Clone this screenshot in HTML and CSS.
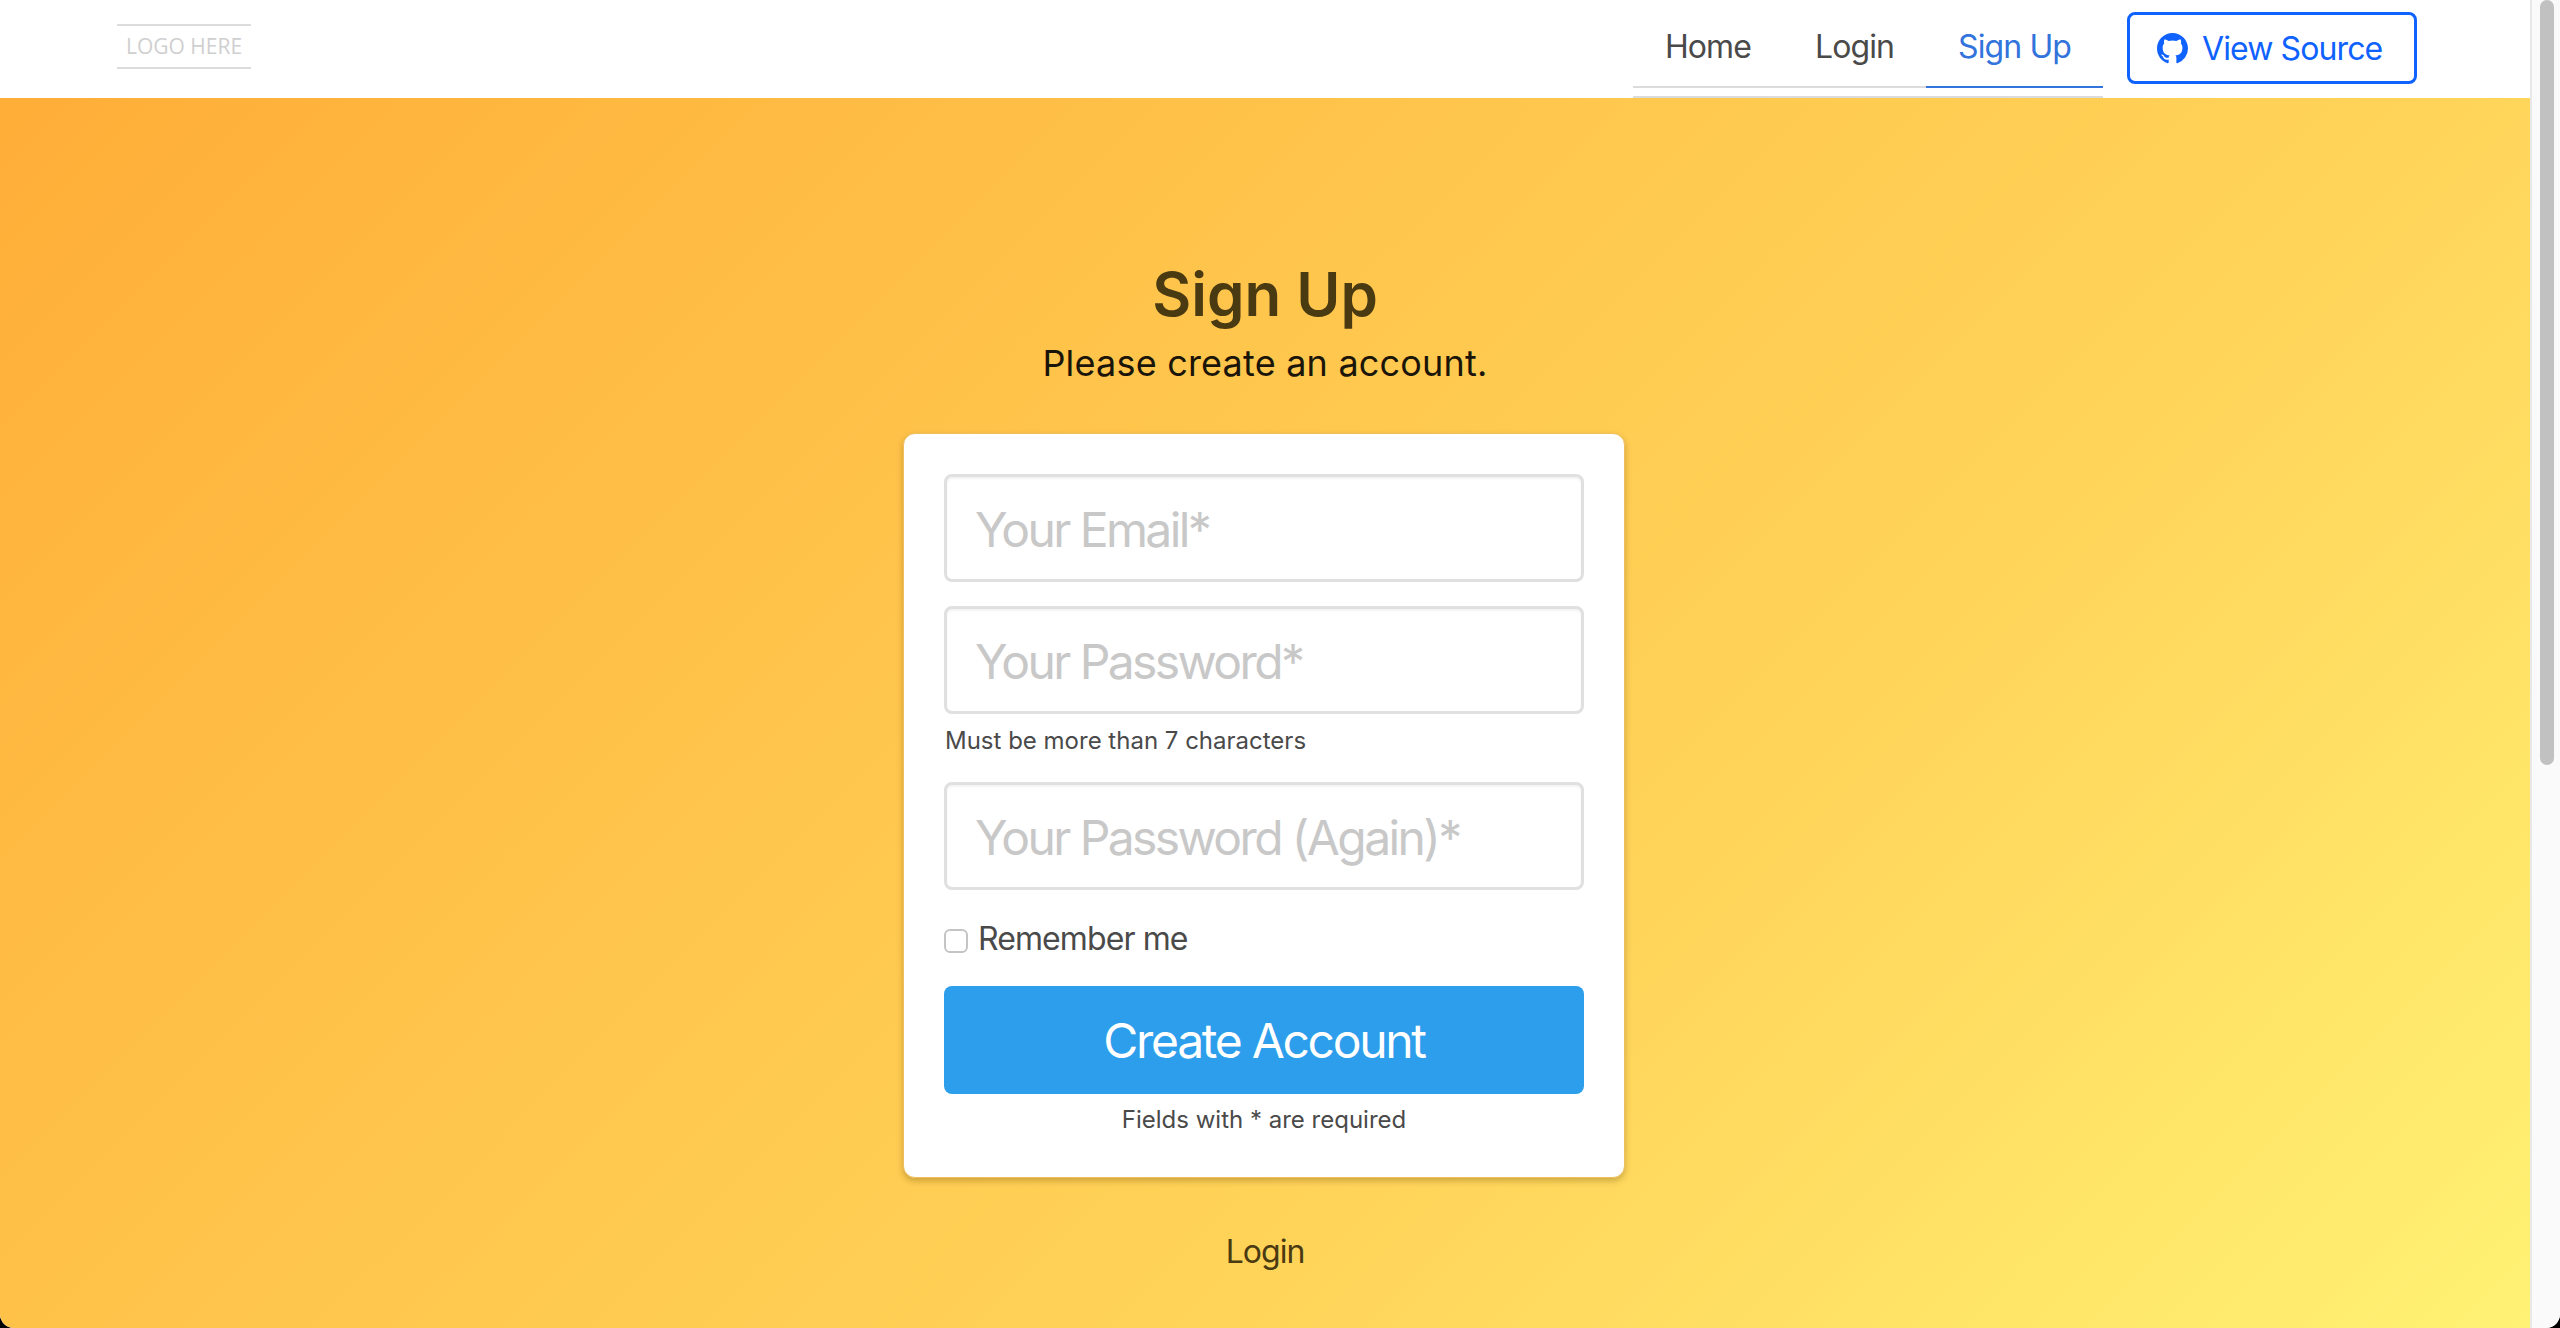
FILE: index.html
```html
<!DOCTYPE html>
<html lang="en">
<head>
    <meta charset="UTF-8">
    <meta name="viewport" content="width=device-width, initial-scale=1.0">
    <title>Sign Up</title>
    <link rel="stylesheet" href="styles.css">
</head>
<body>
    <div class="window">
        <div class="page">
            <header class="navbar">
                <a class="logo" href="#">LOGO HERE</a>
                <div class="nav-right">
                    <nav class="tabs">
                        <a class="tab" href="#">Home</a>
                        <a class="tab" href="#">Login</a>
                        <a class="tab active" href="#">Sign Up</a>
                    </nav>
                    <a class="source-btn" href="#">
                        <svg class="github-icon" viewBox="0 0 16 16" aria-hidden="true">
                            <path fill-rule="evenodd" d="M8 0C3.58 0 0 3.58 0 8c0 3.54 2.29 6.53 5.47 7.59.4.07.55-.17.55-.38 0-.19-.01-.82-.01-1.49-2.01.37-2.53-.49-2.69-.94-.09-.23-.48-.94-.82-1.13-.28-.15-.68-.52-.01-.53.63-.01 1.08.58 1.23.82.72 1.21 1.87.87 2.33.66.07-.52.28-.87.51-1.07-1.78-.2-3.64-.89-3.64-3.95 0-.87.31-1.59.82-2.15-.08-.2-.36-1.02.08-2.12 0 0 .67-.21 2.2.82.64-.18 1.32-.27 2-.27.68 0 1.36.09 2 .27 1.53-1.04 2.2-.82 2.2-.82.44 1.1.16 1.92.08 2.12.51.56.82 1.27.82 2.15 0 3.07-1.87 3.75-3.65 3.95.29.25.54.73.54 1.48 0 1.07-.01 1.93-.01 2.2 0 .21.15.46.55.38A8.013 8.013 0 0016 8c0-4.42-3.58-8-8-8z"></path>
                        </svg>
                        View Source
                    </a>
                </div>
            </header>

            <main class="content">
                <h1>Sign Up</h1>
                <p class="subtitle">Please create an account.</p>

                <form class="card">
                    <input class="field" type="email" placeholder="Your Email*">
                    <input class="field" type="password" placeholder="Your Password*">
                    <p class="help">Must be more than 7 characters</p>
                    <input class="field" type="password" placeholder="Your Password (Again)*">
                    <label class="remember">
                        <input class="check" type="checkbox">
                        Remember me
                    </label>
                    <button class="submit" type="button">Create Account</button>
                    <p class="note">Fields with * are required</p>
                </form>

                <a class="bottom-link" href="#">Login</a>
            </main>
        </div>

        <div class="scrollbar">
            <div class="scroll-thumb"></div>
        </div>
    </div>
</body>
</html>
```

FILE: styles.css
```css
* {
    box-sizing: border-box;
}
html, body {
    height: 100%;
}
body {
    margin: 0;
    background: black;
    font-family: Inter, "Open Sans", sans-serif;
    color: #4a4a4a;
    overflow: hidden;
}
a {
    text-decoration: none;
}
.window {
    display: flex;
    height: 1328px;
    border-radius: 0 0 14px 14px;
    overflow: hidden;
    background: white;
}
.page {
    flex: 1;
    display: flex;
    flex-direction: column;
    min-width: 0;
}

/* navbar */
.navbar {
    display: flex;
    justify-content: space-between;
    height: 98px;
    padding: 0 113px 0 117px;
    background: white;
}
.logo {
    display: block;
    align-self: flex-start;
    width: 134px;
    height: 45px;
    margin-top: 24px;
    border-top: 2px solid #dcdcdc;
    border-bottom: 2px solid #dcdcdc;
    color: #cfcfcf;
    font-family: "Open Sans", sans-serif;
    font-size: 21px;
    line-height: 41px;
    text-align: center;
    white-space: nowrap;
}
.nav-right {
    display: flex;
    align-items: flex-start;
}
.tabs {
    display: flex;
    height: 98px;
    padding-bottom: 10px;
    margin-right: 24px;
    border-bottom: 2px solid #dbdbdb;
}
.tab {
    display: block;
    padding: 0 32px;
    height: 88px;
    border-bottom: 2px solid #dbdbdb;
    color: #4a4a4a;
    font-size: 32px;
    line-height: 94px;
    letter-spacing: -0.9px;
}
.tab.active {
    color: #3273dc;
    border-bottom-color: #3273dc;
}
.source-btn {
    display: flex;
    align-items: center;
    gap: 14px;
    width: 290px;
    height: 72px;
    margin-top: 12px;
    padding-left: 27px;
    border: 3px solid #0f62fe;
    border-radius: 8px;
    color: #0f62fe;
    font-size: 32px;
    letter-spacing: -0.9px;
}
.github-icon {
    width: 31px;
    height: 31px;
    flex: none;
    fill: currentColor;
}

/* sign up form */
.content {
    flex: 1;
    display: flex;
    flex-direction: column;
    align-items: center;
    padding-top: 154px;
    background: linear-gradient(135deg, #ffae38 0%, #ffc249 33%, #ffd55a 67%, #fff274 100%);
}
h1 {
    margin: 0;
    color: #4a3a12;
    font-size: 60px;
    font-weight: 600;
    line-height: 84px;
}
.subtitle {
    margin: 0 0 43px;
    color: #1a1508;
    font-size: 36px;
    line-height: 54px;
    letter-spacing: 0.2px;
}
.card {
    width: 722px;
    height: 745px;
    margin-right: 2px;
    padding: 40px;
    background: white;
    border: 1px solid #eebf5c;
    border-radius: 12px;
    box-shadow: 0 3px 6px rgba(90, 60, 0, 0.3);
}
.field {
    display: block;
    width: 100%;
    height: 108px;
    margin-bottom: 24px;
    padding: 2px 28px 0;
    border: 3px solid #e0e0e0;
    border-radius: 8px;
    box-shadow: inset 0 2px 2px rgba(10, 10, 10, 0.05);
    background: white;
    font-family: inherit;
    font-size: 48px;
    letter-spacing: -2.6px;
    color: #363636;
}
.field::placeholder {
    color: #c8c8c8;
}
.help {
    margin: -22px 0 0;
    height: 66px;
    padding: 0 0 0 1px;
    font-size: 24px;
    line-height: 50px;
}
.remember {
    display: flex;
    align-items: center;
    gap: 10px;
    height: 48px;
    margin-bottom: 24px;
    font-size: 32px;
    letter-spacing: -0.9px;
}
.check {
    appearance: none;
    width: 24px;
    height: 24px;
    margin: 6px 0 0;
    background: white;
    border: 2px solid #c4c4c4;
    border-radius: 6px;
}
.submit {
    display: block;
    width: 100%;
    height: 108px;
    border: 0;
    border-radius: 8px;
    background: #2d9eec;
    color: white;
    font-family: inherit;
    font-size: 48px;
    letter-spacing: -2.3px;
}
.note {
    margin: 10px 0 0;
    font-size: 24px;
    line-height: 32px;
    text-align: center;
}
.bottom-link {
    margin-top: 50px;
    color: #4a3a12;
    font-size: 32px;
    line-height: 48px;
    letter-spacing: -1px;
}

/* fake browser scrollbar */
.scrollbar {
    flex: none;
    width: 30px;
    padding: 0 6px 0 8px;
    background: #fafafa;
    border-left: 2px solid #e8e8e8;
}
.scroll-thumb {
    height: 765px;
    border-radius: 8px;
    background: #c1c1c1;
}
```
